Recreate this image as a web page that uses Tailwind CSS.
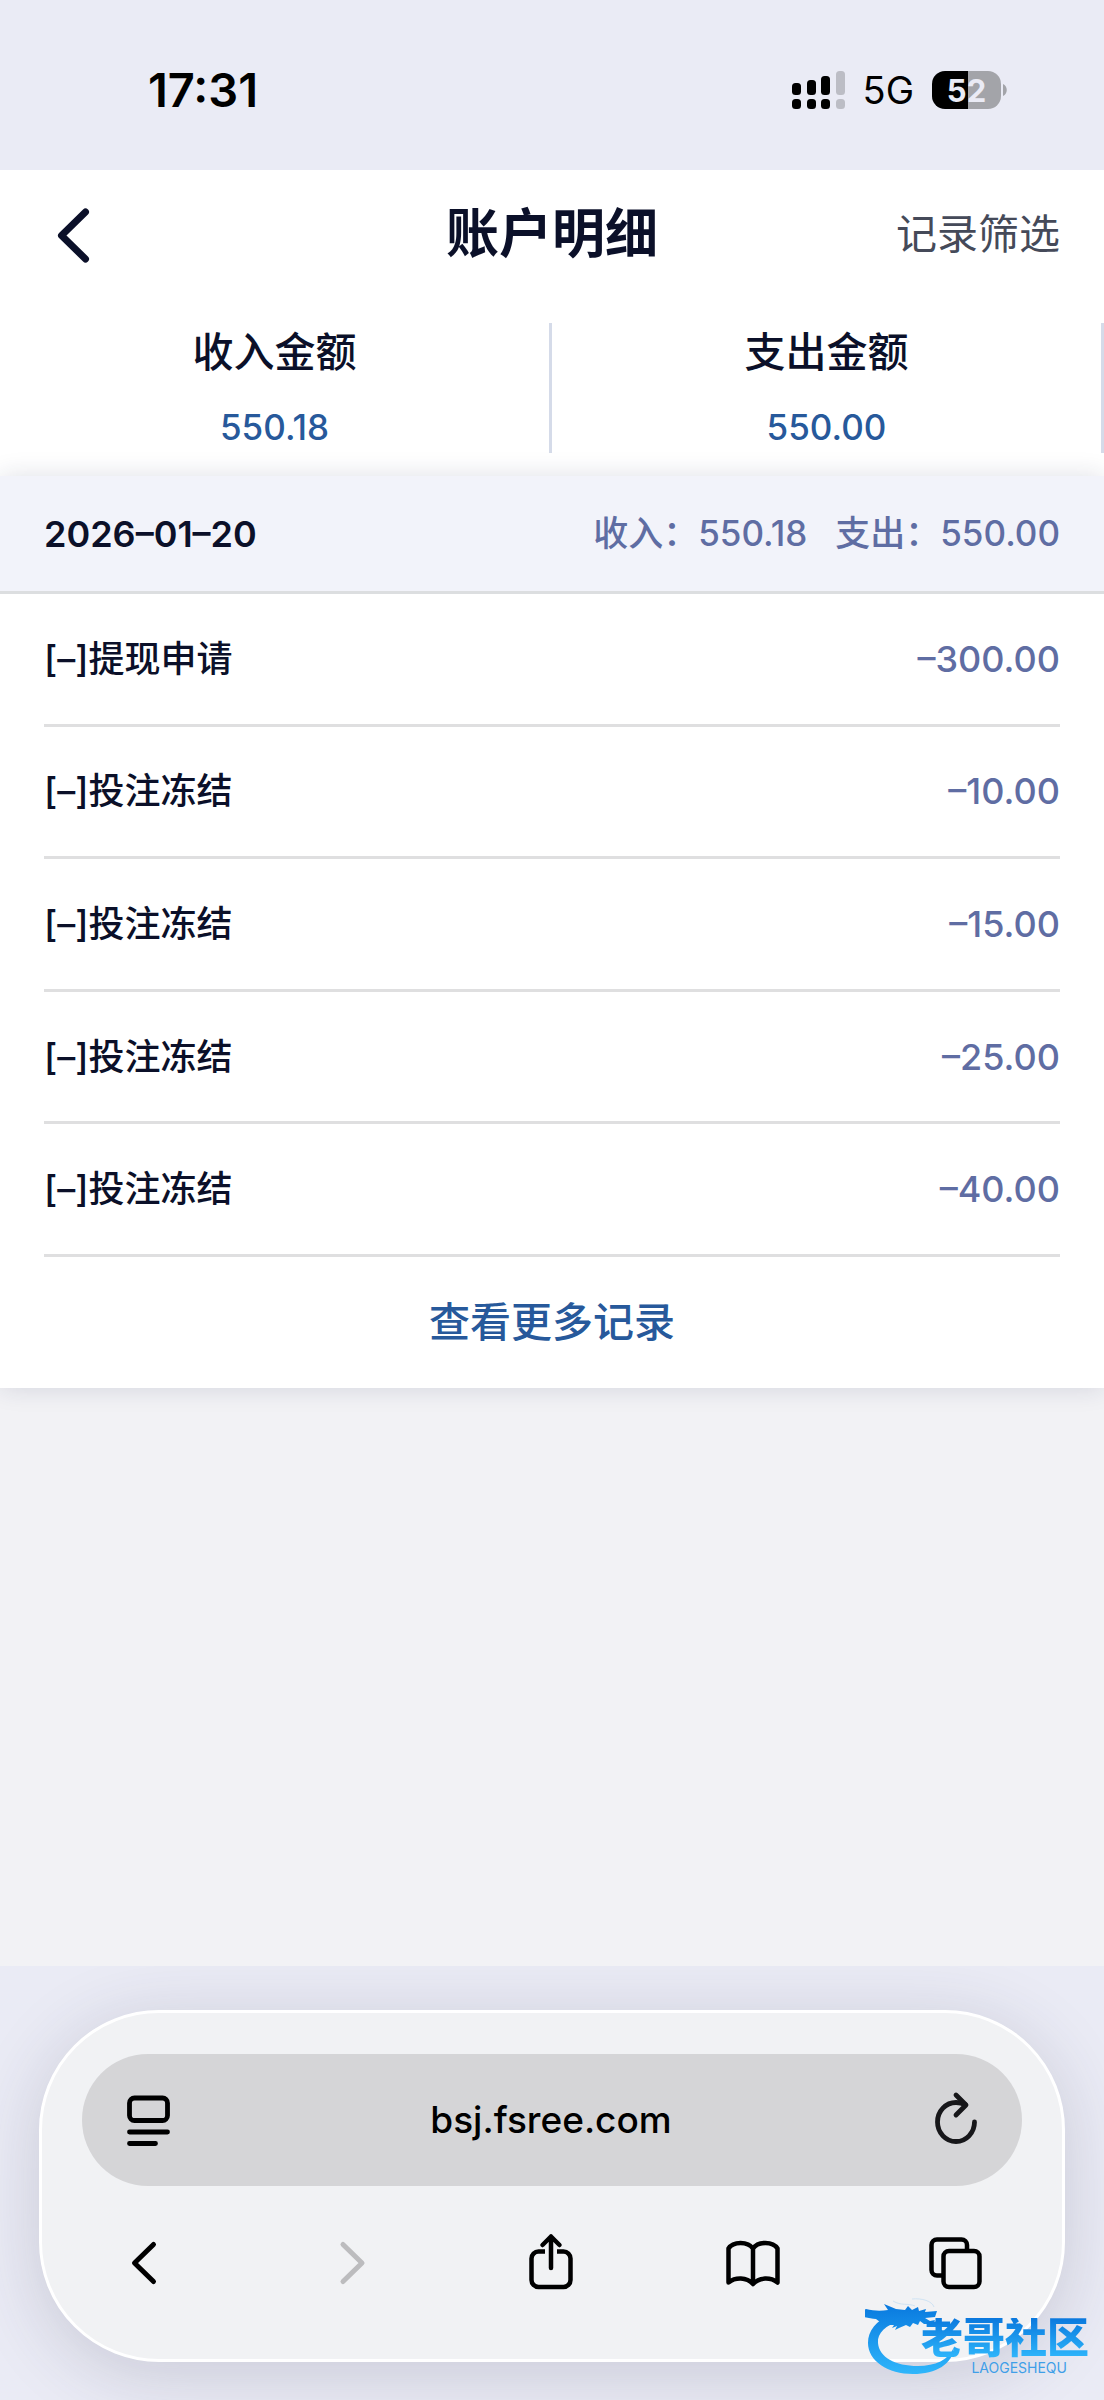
<!DOCTYPE html>
<html lang="zh-CN">
<head>
  <meta charset="UTF-8" />
  <meta name="viewport" content="width=device-width, initial-scale=1.0" />
  <title>账户明细</title>
  <script src="https://cdn.jsdelivr.net/npm/@tailwindcss/browser@4"></script>
</head>
<body class="relative min-h-screen flex flex-col bg-[#f2f2f5] text-[#0b1029] text-[36px] font-['Inter','Noto_Sans_CJK_SC',sans-serif] overflow-x-hidden">
  <!-- Status bar -->
  <div class="h-[170px] pt-[10px] pl-[148px] pr-[97px] flex justify-between items-center bg-[#eaebf5] text-black">
    <span class="text-[47px] font-semibold">17:31</span>
    <div class="flex items-center">
      <svg class="w-[54px] h-[38px]" viewBox="0 0 54 38">
        <rect x="0" y="12" width="9" height="12" rx="3.5" />
        <rect x="15" y="9" width="9" height="15" rx="3.5" />
        <rect x="29" y="5" width="9" height="19" rx="3.5" />
        <rect x="0" y="28" width="9" height="10" rx="3.5" />
        <rect x="15" y="28" width="9" height="10" rx="3.5" />
        <rect x="29" y="28" width="9" height="10" rx="3.5" />
        <g fill="#bcbdc5">
          <rect x="44" y="0" width="9" height="24" rx="3.5" />
          <rect x="44" y="28" width="9" height="10" rx="3.5" />
        </g>
      </svg>
      <span class="ml-[17px] text-[38px]">5G</span>
      <span class="ml-[18px] w-[69px] h-[38px] rounded-[13px] bg-[linear-gradient(90deg,#000_52%,#a3a4a9_52%)] flex items-center justify-center text-[31px] leading-none font-bold text-[#eaebf5]">52</span>
      <svg class="ml-[2px] w-[4px] h-[12px]" viewBox="0 0 4 12"><path d="M0 0c5 2 5 10 0 12z" fill="#a3a4a9" /></svg>
    </div>
  </div>

  <!-- Page header -->
  <header class="h-[130px] px-[44px] bg-white grid grid-cols-3 items-center">
    <button type="button" aria-label="返回" class="w-[60px] h-[60px]">
      <svg class="w-[60px] h-[60px]" viewBox="0 0 60 60" fill="none" stroke="currentColor" stroke-width="7" stroke-linecap="round" stroke-linejoin="round">
        <path d="M41.500 7L17.500 30.500l24 23.500" />
      </svg>
    </button>
    <h1 class="text-center text-[53px] font-bold">账户明细</h1>
    <a href="#" class="text-right text-[41px] text-[#454a59]">记录筛选</a>
  </header>

  <!-- Totals -->
  <section class="py-[23px] bg-white grid grid-cols-2 text-center">
    <div class="border-r-3 border-[#d5dbe9]">
      <p class="text-[41px] leading-[58px] font-medium">收入金额</p>
      <p class="mt-5 text-[35px] leading-[52px] font-medium text-[#27599b]">550.18</p>
    </div>
    <div class="border-r-3 border-[#d5dbe9]">
      <p class="text-[41px] leading-[58px] font-medium">支出金额</p>
      <p class="mt-5 text-[35px] leading-[52px] font-medium text-[#27599b]">550.00</p>
    </div>
  </section>

  <!-- Records -->
  <main class="flex-1">
    <section class="relative bg-white shadow-[0_0_24px_rgba(30,35,80,0.14)]">
      <div class="h-[118px] px-[44px] flex justify-between items-center bg-[#f2f3fa] border-b-3 border-[#dcdee0]">
        <h2 class="font-semibold">2026–01–20</h2>
        <p class="flex gap-[28px] text-[35px] font-medium text-[#5f6da3]">
          <span>收入：550.18</span>
          <span>支出：550.00</span>
        </p>
      </div>
      <ul class="h-[663px] mx-[44px] grid grid-rows-5 font-medium">
        <li class="flex justify-between items-center border-b-3 border-[#dfdfe0]">
          <span>[–]提现申请</span>
          <span class="text-[#5f6da3]">–300.00</span>
        </li>
        <li class="flex justify-between items-center border-b-3 border-[#dfdfe0]">
          <span>[–]投注冻结</span>
          <span class="text-[#5f6da3]">–10.00</span>
        </li>
        <li class="flex justify-between items-center border-b-3 border-[#dfdfe0]">
          <span>[–]投注冻结</span>
          <span class="text-[#5f6da3]">–15.00</span>
        </li>
        <li class="flex justify-between items-center border-b-3 border-[#dfdfe0]">
          <span>[–]投注冻结</span>
          <span class="text-[#5f6da3]">–25.00</span>
        </li>
        <li class="flex justify-between items-center border-b-3 border-[#dfdfe0]">
          <span>[–]投注冻结</span>
          <span class="text-[#5f6da3]">–40.00</span>
        </li>
      </ul>
      <a href="#" class="h-[131px] flex items-center justify-center text-[41px] font-medium text-[#27599b]">查看更多记录</a>
    </section>
  </main>

  <!-- Browser toolbar -->
  <footer class="pt-[44px] pb-[38px] px-[39px] bg-[#eaebf5] text-black overflow-hidden">
    <div class="h-[352px] px-[40px] pt-[41px] rounded-[120px] border-3 border-white bg-[#f1f2f4] shadow-[0_12px_70px_rgba(50,50,80,0.18)]">
      <div class="h-[132px] pl-[35px] pr-[37px] flex items-center rounded-full bg-[#d5d5d7]">
        <button type="button" aria-label="页面设置" class="shrink-0 w-[60px] h-[60px]">
          <svg class="w-[60px] h-[60px]" viewBox="0 0 60 60" fill="none" stroke="currentColor" stroke-width="4.8" stroke-linecap="round">
            <rect x="12.500" y="8" width="38" height="22.500" rx="5" />
            <path d="M12.500 42h38M12.500 53.500h26" />
          </svg>
        </button>
        <input type="text" aria-label="网址" value="bsj.fsree.com" class="flex-1 min-w-0 text-center text-[37px] font-medium outline-none" />
        <button type="button" aria-label="刷新" class="shrink-0 w-[60px] h-[60px] text-[#17171a]">
          <svg class="w-[60px] h-[60px]" viewBox="0 0 60 60" fill="none" stroke="currentColor" stroke-width="4.8" stroke-linecap="round" stroke-linejoin="round">
            <path d="M49.500 32a18.500 19.500 0 1 1-18.500-19.500c3 0 6 .5 9 2" />
            <path d="M31 5l10 10-10 10" />
          </svg>
        </button>
      </div>
      <nav class="mt-[47px] pl-[35px] pr-[37px] flex justify-between">
        <button type="button" aria-label="后退" class="w-[60px] h-[60px]">
          <svg class="w-[60px] h-[60px]" viewBox="0 0 60 60" fill="none" stroke="currentColor" stroke-width="5" stroke-linecap="round" stroke-linejoin="round">
            <path d="M36.500 11.500L17.500 30l19 18.500" />
          </svg>
        </button>
        <button type="button" aria-label="前进" class="w-[60px] h-[60px] text-[#bcbcbe]" disabled>
          <svg class="w-[60px] h-[60px]" viewBox="0 0 60 60" fill="none" stroke="currentColor" stroke-width="5" stroke-linecap="round" stroke-linejoin="round">
            <path d="M24 11.500L43 30 24 48.500" />
          </svg>
        </button>
        <button type="button" aria-label="分享" class="w-[60px] h-[60px]">
          <svg class="w-[60px] h-[60px]" viewBox="0 0 60 60" fill="none" stroke="currentColor" stroke-width="4.500" stroke-linejoin="round">
            <path d="M24 18.500h-6.500a7 7 0 0 0-7 7V47a7 7 0 0 0 7 7h25a7 7 0 0 0 7-7V25.500a7 7 0 0 0-7-7H36" />
            <path d="M30 35V3.500M21.500 12L30 3.500l8.500 8.500" stroke-linecap="round" />
          </svg>
        </button>
        <button type="button" aria-label="书签" class="w-[60px] h-[60px]">
          <svg class="w-[60px] h-[60px]" viewBox="0 0 60 60" fill="none" stroke="currentColor" stroke-width="4.500" stroke-linejoin="round" stroke-linecap="round">
            <path d="M30 15.500C25 8 10 8 5.500 15.500V49.500c7-5.500 18-5.500 24.500 1.500 6.500-7 17.500-7 24.500-1.500V15.500C50 8 35 8 30 15.500zV50" />
          </svg>
        </button>
        <button type="button" aria-label="标签页" class="w-[60px] h-[60px]">
          <svg class="w-[60px] h-[60px]" viewBox="0 0 60 60" fill="none" stroke="currentColor" stroke-width="4.500">
            <rect x="18.500" y="18" width="36" height="36" rx="5.500" />
            <path d="M18.500 42.500H12a5.500 5.500 0 0 1-5.500-5.500V12A5.500 5.500 0 0 1 12 6.500h24.500A5.500 5.500 0 0 1 42 12v6" />
          </svg>
        </button>
      </nav>
    </div>
  </footer>

  <!-- Community watermark -->
  <div class="absolute right-[15px] bottom-[24px] w-[224px] h-[78px]">
    <svg class="absolute inset-0 w-full h-full" viewBox="0 0 224 78">
      <defs>
        <linearGradient id="dragon" gradientUnits="userSpaceOnUse" x1="0" y1="5" x2="0" y2="76">
          <stop offset="0" stop-color="#0878de" />
          <stop offset="1" stop-color="#2fb6fb" />
        </linearGradient>
      </defs>
      <g fill="url(#dragon)">
        <!-- tail ring -->
        <path d="M26 17C11 22 3 33 3 45c0 18 20 31 45 31 23 0 40-10 41-27-5 13-19 19-36 19-23 0-39-9-40-23-1-10 8-18 22-22z" />
        <!-- head, mane and whisker -->
        <path d="M1 11c8 2 15 2 22 1l-4-6 12 5 9 1 3-4 4 4 6-3 1 4 7-2-1 3 12-1-2 6-10 1 5 3 5-1-2 4-9 0-4-3-2 4-5-2-3 4-4-2-7 3-4 2 2-4-5 2 2-3-10 0-8-6c-7-1-15-1-18-7z" />
      </g>
      <path fill="none" stroke="#cfe3f3" stroke-width="1" d="M28 3c8 5 15 2 22 5M47 1c10-1 20 2 22 8" />
    </svg>
    <span class="absolute right-0 top-[20px] text-[42px] leading-[40px] font-black whitespace-nowrap bg-linear-to-b from-[#0b78dd] to-[#2fb6fb] bg-clip-text text-transparent">老哥社区</span>
    <span class="absolute right-[22px] top-[62px] text-[14px] leading-[16px] text-[#3f9fe8]">LAOGESHEQU</span>
  </div>
</body>
</html>
